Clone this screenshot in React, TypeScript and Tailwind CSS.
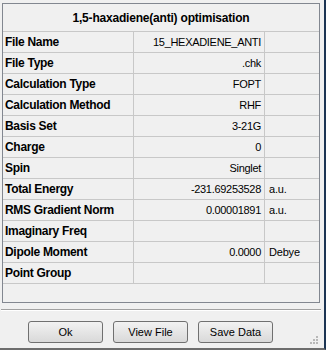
import React from 'react';

interface Row {
    label: string;
    value: string;
    unit?: string;
}

const ROWS: Row[] = [
    { label: 'File Name', value: '15_HEXADIENE_ANTI' },
    { label: 'File Type', value: '.chk' },
    { label: 'Calculation Type', value: 'FOPT' },
    { label: 'Calculation Method', value: 'RHF' },
    { label: 'Basis Set', value: '3-21G' },
    { label: 'Charge', value: '0' },
    { label: 'Spin', value: 'Singlet' },
    { label: 'Total Energy', value: '-231.69253528', unit: 'a.u.' },
    { label: 'RMS Gradient Norm', value: '0.00001891', unit: 'a.u.' },
    { label: 'Imaginary Freq', value: '' },
    { label: 'Dipole Moment', value: '0.0000', unit: 'Debye' },
    { label: 'Point Group', value: '' },
];

const DialogButton: React.FC<{ label: string }> = ({ label }) => (
    <button
        type="button"
        className="w-[75px] h-[22px] rounded-[3px] border border-[#707070] bg-gradient-to-b from-[#f2f2f2] to-[#d9d9d9] text-[11px] text-black leading-none"
    >
        {label}
    </button>
);

export default function App() {
    return (
        <div
            className="w-[326px] h-[350px] bg-[#f0f0f0] border-r-2 border-r-[#1c3453] border-b-2 border-b-[#6d6d6d] flex flex-col relative"
            style={{ fontFamily: '"Liberation Sans", Arial, sans-serif' }}
        >
            <div className="ml-[2px] mt-[3px] w-[318px] h-[300px] border border-[#828790] flex flex-col">
                <div className="h-[28px] border-b border-[#c8c8c8] flex items-center justify-center text-[12px] font-bold text-black tracking-[-0.2px]">
                    1,5-haxadiene(anti) optimisation
                </div>
                {ROWS.map((row) => (
                    <div key={row.label} className="h-[21px] border-b border-[#c8c8c8] flex text-black">
                        <div className="w-[131px] border-r border-[#c8c8c8] flex items-center pl-[2px] text-[12px] font-bold tracking-[-0.3px]">
                            {row.label}
                        </div>
                        <div className="w-[131px] border-r border-[#c8c8c8] flex items-center justify-end pr-[3px] text-[11px] tracking-[-0.3px]">
                            {row.value}
                        </div>
                        <div className="flex-1 flex items-center pl-[4px] text-[11px] tracking-[-0.2px]">
                            {row.unit}
                        </div>
                    </div>
                ))}
            </div>

            <div className="ml-[1px] mt-[6px] w-[320px] border-t border-t-[#a0a0a0] border-b border-b-white" />

            <div className="mt-[10px] ml-[28px] flex gap-[10px]">
                <DialogButton label="Ok" />
                <DialogButton label="View File" />
                <DialogButton label="Save Data" />
            </div>

            <svg className="absolute right-[5px] bottom-[3px]" width="10" height="10" viewBox="0 0 10 10">
                <rect x="7" y="1" width="2" height="2" fill="#b8b8b8" />
                <rect x="4" y="4" width="2" height="2" fill="#b8b8b8" />
                <rect x="7" y="4" width="2" height="2" fill="#b8b8b8" />
                <rect x="1" y="7" width="2" height="2" fill="#b8b8b8" />
                <rect x="4" y="7" width="2" height="2" fill="#b8b8b8" />
                <rect x="7" y="7" width="2" height="2" fill="#b8b8b8" />
            </svg>
        </div>
    );
}
